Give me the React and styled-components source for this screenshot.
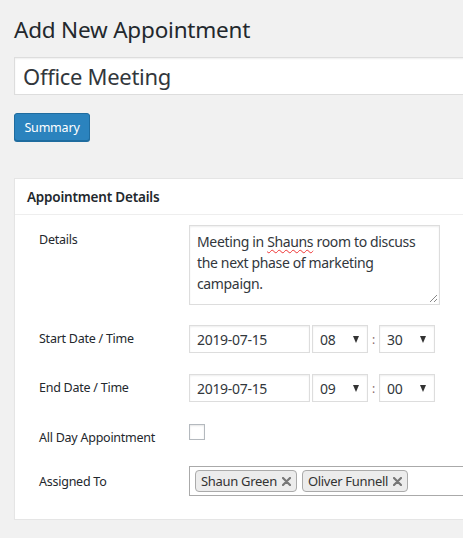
import React from 'react'
import styled, { createGlobalStyle } from 'styled-components'

const Global = createGlobalStyle`
  html, body {
    margin: 0;
    padding: 0;
    background: #f1f1f1;
    overflow: hidden;
  }
  body {
    font-family: "Noto Sans", "Open Sans", sans-serif;
    color: #23282d;
  }
`

const Page = styled.div`
  width: 520px;
  padding: 12px 0 0 14px;
`

const Title = styled.h1`
  margin: 0;
  font-size: 22.5px;
  font-weight: 400;
  line-height: 36px;
  letter-spacing: -0.2px;
  color: #23282d;
`

const TitleInput = styled.div`
  margin-top: 9px;
  height: 36px;
  border: 1px solid #ddd;
  background: #fff;
  box-shadow: inset 0 1px 2px rgba(0, 0, 0, 0.07);
  padding-left: 8px;
  display: flex;
  align-items: center;
  font-size: 22px;
  letter-spacing: -0.3px;
  color: #32373c;
`

const PrimaryButton = styled.button`
  margin-top: 18px;
  height: 28px;
  width: 76px;
  padding: 0;
  border: 1px solid #1f6c9f;
  border-radius: 3px;
  background: #2b83be;
  box-shadow: 0 1px 0 #1f6c9f;
  color: #fff;
  font-family: inherit;
  font-size: 12.5px;
  letter-spacing: -0.2px;
  cursor: pointer;
`

const Panel = styled.section`
  margin-top: 37px;
  background: #fff;
  border: 1px solid #e5e5e5;
  box-shadow: 0 1px 1px rgba(0, 0, 0, 0.04);
`

const PanelHead = styled.h2`
  margin: 0;
  height: 35px;
  padding-left: 12px;
  display: flex;
  align-items: center;
  font-size: 13.5px;
  font-weight: 600;
  letter-spacing: -0.2px;
  border-bottom: 1px solid #eee;
  color: #23282d;
`

const PanelBody = styled.div`
  padding: 10px 0 23px 24px;
  display: flex;
  flex-direction: column;
`

const Row = styled.div`
  display: flex;
  align-items: flex-start;
  margin-top: ${p => p.$space || 0}px;
`

const Label = styled.div`
  width: 150px;
  flex: none;
  padding-top: ${p => p.$top || 5}px;
  font-size: 12.5px;
  line-height: 17px;
  letter-spacing: -0.25px;
  color: #23282d;
`

const TextBox = styled.div`
  position: relative;
  box-sizing: border-box;
  width: 251px;
  height: 80px;
  padding: 5px 7px;
  border: 1px solid #ddd;
  box-shadow: inset 0 1px 2px rgba(0, 0, 0, 0.07);
  font-size: 14px;
  line-height: 21px;
  letter-spacing: -0.35px;
  color: #32373c;
`

const Misspelt = styled.span`
  text-decoration: underline wavy #e33;
  text-decoration-thickness: 1px;
  text-underline-offset: 2px;
`

const Grip = styled.svg`
  position: absolute;
  right: 1px;
  bottom: 1px;
`

const Fields = styled.div`
  display: flex;
  align-items: center;
`

const Field = styled.div`
  box-sizing: border-box;
  width: ${p => p.$w}px;
  height: 28px;
  padding: 0 7px;
  border: 1px solid #ddd;
  box-shadow: inset 0 1px 2px rgba(0, 0, 0, 0.07);
  display: flex;
  align-items: center;
  justify-content: space-between;
  font-size: 14px;
  letter-spacing: -0.3px;
  color: #32373c;
  margin-right: ${p => p.$mr || 0}px;
`

const Arrow = styled.span`
  width: 0;
  height: 0;
  border-left: 3.5px solid transparent;
  border-right: 3.5px solid transparent;
  border-top: 7px solid #333;
  margin-right: 1px;
`

const Colon = styled.span`
  width: 11px;
  text-align: center;
  font-size: 12px;
  color: #8a6a6a;
`

const Check = styled.div`
  box-sizing: border-box;
  width: 16px;
  height: 16px;
  border: 1px solid #b4b9be;
  background: #fff;
  box-shadow: inset 0 1px 2px rgba(0, 0, 0, 0.1);
`

const Multi = styled.div`
  box-sizing: border-box;
  flex: 1;
  height: 30px;
  border: 1px solid #aaa;
  display: flex;
  align-items: center;
  gap: 5px;
  padding-left: 5px;
`

const Tag = styled.span`
  box-sizing: border-box;
  height: 22px;
  padding: 0 5px 0 5px;
  border: 1px solid #aaa;
  border-radius: 4px;
  background: #ececec;
  display: flex;
  align-items: center;
  gap: 5px;
  font-size: 13px;
  letter-spacing: -0.3px;
  color: #333;
`

const Remove = () => (
  <svg width="9" height="9" viewBox="0 0 9 9">
    <path d="M1 1 L8 8 M8 1 L1 8" stroke="#777" strokeWidth="2.2" strokeLinecap="round" />
  </svg>
)

const Select = ({ value }) => (
  <>
    {value}
    <Arrow />
  </>
)

export default function App() {
  return (
    <>
      <Global />
      <Page>
        <Title>Add New Appointment</Title>
        <TitleInput>Office Meeting</TitleInput>
        <PrimaryButton>Summary</PrimaryButton>
        <Panel>
          <PanelHead>Appointment Details</PanelHead>
          <PanelBody>
            <Row>
              <Label $top={6}>Details</Label>
              <TextBox>
                Meeting in <Misspelt>Shauns</Misspelt> room to discuss the next phase of marketing campaign.
                <Grip width="9" height="9" viewBox="0 0 9 9">
                  <path d="M8 1 L1 8 M8 5 L5 8" stroke="#888" strokeWidth="1" />
                </Grip>
              </TextBox>
            </Row>
            <Row $space={20}>
              <Label>Start Date / Time</Label>
              <Fields>
                <Field $w={121} $mr={2}>2019-07-15</Field>
                <Field $w={56}><Select value="08" /></Field>
                <Colon>:</Colon>
                <Field $w={56}><Select value="30" /></Field>
              </Fields>
            </Row>
            <Row $space={21}>
              <Label>End Date / Time</Label>
              <Fields>
                <Field $w={121} $mr={2}>2019-07-15</Field>
                <Field $w={56}><Select value="09" /></Field>
                <Colon>:</Colon>
                <Field $w={56}><Select value="00" /></Field>
              </Fields>
            </Row>
            <Row $space={22}>
              <Label $top={5}>All Day Appointment</Label>
              <Check />
            </Row>
            <Row $space={20}>
              <Label $top={7}>Assigned To</Label>
              <Multi>
                <Tag>Shaun Green <Remove /></Tag>
                <Tag>Oliver Funnell <Remove /></Tag>
              </Multi>
            </Row>
          </PanelBody>
        </Panel>
      </Page>
    </>
  )
}
